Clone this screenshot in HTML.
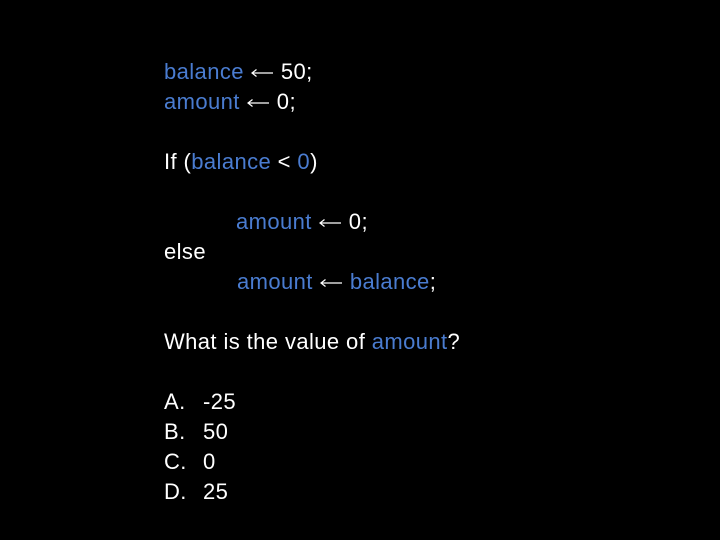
<!DOCTYPE html>
<html><head><meta charset="utf-8"><style>
html,body{margin:0;padding:0;background:#000;width:720px;height:540px;overflow:hidden}
.l{position:absolute;line-height:30px;height:30px;font-family:"Liberation Sans",sans-serif;font-size:22px;letter-spacing:0.4px;color:#fff;white-space:pre}
.b{color:#4a7cd0}
.a{display:inline-block;width:22px;height:10px;vertical-align:1px;margin:0 1px}
</style></head><body>
<div class="l" style="left:164px;top:57px"><span class="b">balance</span> <svg class="a" viewBox="0 0 22 10"><path d="M1 5H22M5.5 1.5L1 5L5.5 8.5" stroke="#fff" stroke-width="1.2" fill="none"/></svg> 50;</div>
<div class="l" style="left:164px;top:87px"><span class="b">amount</span> <svg class="a" viewBox="0 0 22 10"><path d="M1 5H22M5.5 1.5L1 5L5.5 8.5" stroke="#fff" stroke-width="1.2" fill="none"/></svg> 0;</div>
<div class="l" style="left:164px;top:147px">If (<span class="b">balance</span> &lt; <span class="b">0</span>)</div>
<div class="l" style="left:236px;top:207px"><span class="b">amount</span> <svg class="a" viewBox="0 0 22 10"><path d="M1 5H22M5.5 1.5L1 5L5.5 8.5" stroke="#fff" stroke-width="1.2" fill="none"/></svg> 0;</div>
<div class="l" style="left:164px;top:237px">else</div>
<div class="l" style="left:237px;top:267px"><span class="b">amount</span> <svg class="a" viewBox="0 0 22 10"><path d="M1 5H22M5.5 1.5L1 5L5.5 8.5" stroke="#fff" stroke-width="1.2" fill="none"/></svg> <span class="b">balance</span>;</div>
<div class="l" style="left:164px;top:327px">What is the value of <span class="b">amount</span>?</div>
<div class="l" style="left:164px;top:387px">A.</div><div class="l" style="left:203px;top:387px">-25</div>
<div class="l" style="left:164px;top:417px">B.</div><div class="l" style="left:203px;top:417px">50</div>
<div class="l" style="left:164px;top:447px">C.</div><div class="l" style="left:203px;top:447px">0</div>
<div class="l" style="left:164px;top:477px">D.</div><div class="l" style="left:203px;top:477px">25</div>
</body></html>
